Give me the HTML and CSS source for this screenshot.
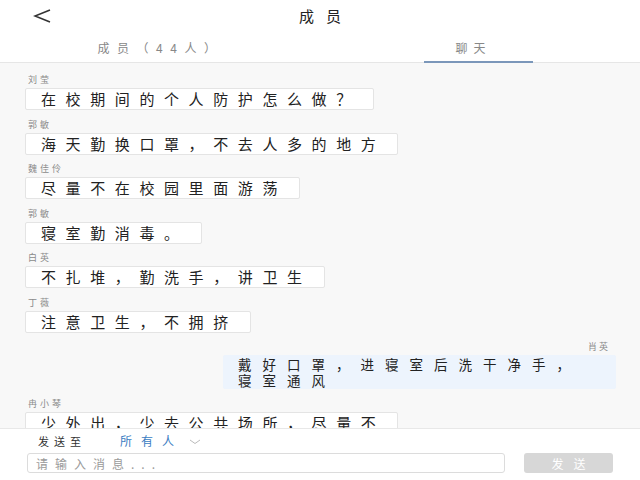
FILE: index.html
```html
<!DOCTYPE html>
<html lang="zh-CN">
<head>
    <meta charset="UTF-8">
    <meta name="viewport" content="width=device-width, initial-scale=1.0">
    <title>成员</title>
    <link rel="stylesheet" href="styles.css">
</head>
<body>
    <div class="page">
        <header class="top-bar">
            <a class="back" href="#">
                <svg width="20" height="18" viewBox="0 0 20 18">
                    <polyline points="17,2 2,8 17,14" fill="none" stroke="#333" stroke-width="1.6" stroke-linejoin="miter"/>
                </svg>
            </a>
            <h1 class="title">成员</h1>
        </header>

        <nav class="tabs">
            <div class="tab">成员（44人）</div>
            <div class="tab active">聊天</div>
        </nav>

        <main class="chat">
            <div class="msg">
                <p class="name">刘莹</p>
                <div class="bubble">在校期间的个人防护怎么做？</div>
            </div>
            <div class="msg">
                <p class="name">郭敏</p>
                <div class="bubble">海天勤换口罩，不去人多的地方</div>
            </div>
            <div class="msg">
                <p class="name">魏佳伶</p>
                <div class="bubble">尽量不在校园里面游荡</div>
            </div>
            <div class="msg">
                <p class="name">郭敏</p>
                <div class="bubble">寝室勤消毒。</div>
            </div>
            <div class="msg">
                <p class="name">白英</p>
                <div class="bubble">不扎堆，勤洗手，讲卫生</div>
            </div>
            <div class="msg">
                <p class="name">丁薇</p>
                <div class="bubble">注意卫生，不拥挤</div>
            </div>
            <div class="msg mine">
                <p class="name">肖英</p>
                <div class="bubble">戴好口罩，进寝室后洗干净手，<br>寝室通风</div>
            </div>
            <div class="msg">
                <p class="name">冉小琴</p>
                <div class="bubble">少外出，少去公共场所，尽量不</div>
            </div>
        </main>

        <footer class="composer">
            <div class="send-to">
                <span class="label">发送至</span>
                <span class="target">所有人</span>
                <svg class="chevron" width="12" height="8" viewBox="0 0 12 8">
                    <polyline points="1,2 6,5.5 11,2" fill="none" stroke="#bbb" stroke-width="1"/>
                </svg>
            </div>
            <div class="input-row">
                <input class="input" type="text" placeholder="请输入消息...">
                <button class="send">发送</button>
            </div>
        </footer>
    </div>
</body>
</html>
```

FILE: styles.css
```css
* {
    margin: 0;
    padding: 0;
    box-sizing: border-box;
    font-family: "Noto Sans CJK SC", "Noto Sans", sans-serif;
}

body {
    background: #fff;
    color: #222;
}

.page {
    width: 640px;
    height: 480px;
    display: flex;
    flex-direction: column;
    overflow: hidden;
}

.top-bar {
    height: 34px;
    display: flex;
    align-items: center;
    justify-content: center;
    position: relative;
    background: #fff;
    padding-bottom: 3px;
}

.back {
    position: absolute;
    left: 33px;
    top: 8px;
    display: flex;
}

.title {
    font-size: 15px;
    font-weight: 400;
    letter-spacing: 12px;
    margin-right: -12px;
    color: #222;
}

.tabs {
    height: 29px;
    display: flex;
    border-bottom: 1px solid #e6e6e6;
    background: #fff;
}

.tab {
    flex: 1;
    display: flex;
    justify-content: center;
    align-items: center;
    font-size: 12px;
    letter-spacing: 7.5px;
    color: #888;
    position: relative;
    padding-bottom: 2px;
    padding-left: 4px;
}

.tab.active {
    padding-left: 0;
    padding-right: 10px;
    letter-spacing: 6px;
}

.tab.active::after {
    content: "";
    position: absolute;
    left: 107px;
    right: 107px;
    bottom: -1px;
    height: 2px;
    background: #7b97ba;
}

.chat {
    flex: 1;
    overflow: hidden;
    background: #f8f8f8;
    padding: 10px 25px 0 25px;
}

.msg {
    display: flex;
    flex-direction: column;
    align-items: flex-start;
    margin-bottom: 7.5px;
}

.name {
    font-size: 9px;
    line-height: 13px;
    letter-spacing: 3px;
    color: #8a8a8a;
    padding-left: 3px;
    margin-bottom: 2px;
}

.bubble {
    background: #fff;
    border: 1px solid #e4e4e4;
    border-radius: 2px;
    font-size: 15px;
    line-height: 20px;
    letter-spacing: 9.6px;
    color: #222;
    padding: 0 12px 0 15px;
    max-width: 393px;
}

.msg.mine {
    align-items: flex-end;
    margin-right: -1px;
}

.msg.mine .name {
    padding-right: 6px;
    padding-left: 0;
    letter-spacing: 2px;
}

.msg.mine .bubble {
    width: 393px;
    background: #edf4fd;
    border-color: #edf4fd;
    font-size: 13.5px;
    line-height: 16px;
    letter-spacing: 11px;
    padding: 0 12px 0 14px;
}

.composer {
    height: 52px;
    border-top: 1px solid #e8e8e8;
    background: #fff;
    padding: 2px 27px 0 27px;
}

.send-to {
    display: flex;
    align-items: center;
    height: 20px;
    padding-left: 11px;
    line-height: 20px;
}

.label {
    font-size: 11px;
    letter-spacing: 5px;
    color: #333;
    margin-right: 34px;
}

.target {
    font-size: 12px;
    letter-spacing: 9px;
    color: #3a7cc2;
    margin-right: 6px;
}

.chevron {
    margin-top: 1px;
}

.input-row {
    display: flex;
    align-items: center;
    gap: 19px;
    margin-top: 2px;
}

.input {
    width: 478px;
    height: 20px;
    border: 1px solid #dcdcdc;
    border-radius: 3px;
    font-size: 12px;
    letter-spacing: 7px;
    padding-left: 8px;
    outline: none;
}

.input::placeholder {
    color: #9a9a9a;
}

.send {
    width: 89px;
    height: 20px;
    border: none;
    border-radius: 3px;
    background: #d7d7d7;
    color: #fff;
    font-size: 12px;
    letter-spacing: 10px;
    padding-left: 10px;
}
```
